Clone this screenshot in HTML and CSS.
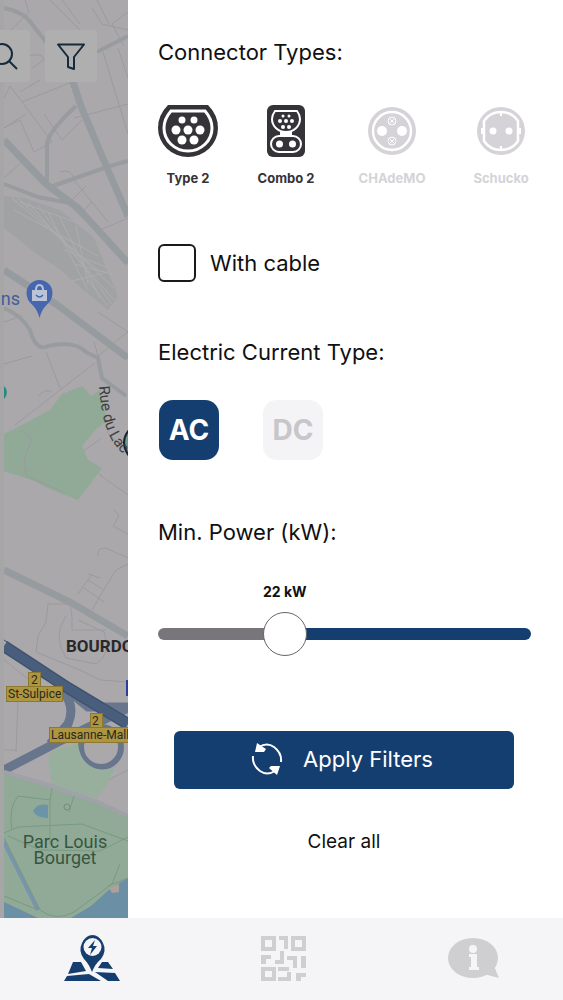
FILE: index.html
```html
<!DOCTYPE html>
<html lang="en">
<head>
<meta charset="utf-8">
<meta name="viewport" content="width=device-width, initial-scale=1">
<title>Charging station filters</title>
<link rel="stylesheet" href="styles.css">
</head>
<body>
<div class="app">
  <aside class="map" aria-label="Map">
    <svg class="map-canvas" viewBox="0 0 128 918" preserveAspectRatio="xMinYMin slice">
      <rect width="128" height="918" fill="#aaa8aa"/>
      <g class="minor">
        <path d="M25 0l4 12-18 18M50 0l30 30M62 0l18 24M92 8l10 16 26 6M97 0l12 24M128 12l-16 12 12 22M103 52l25 82M118 48l10 30M4 98l6-12 42 56-18 10-14-32-16 8M20 92l20-12M22 102l55-22M4 128l22-14M44 114l18 26 20-20M74 118l54-14M4 178l20-18M60 172q12-4 14 8l34 42M72 200l14-14M84 210l8-8M100 230l28-12M30 56q12-4 14 4l-12 8"/>
        <path d="M4 322l18-6M4 364l28-8M46 352l14 36M15 425l80-62M20 430l12 8-8 22 4 14M38 396q8-8 14-4M94 342l4 14 30-24M98 312l30 20M115 424l-8 8 20 20M82 452l20-14M86 460l16 16M100 475l28 20M114 510l5 6-6 10 15 8M98 556q-2-8 8-8l22 10M92 610l14-24 10-16 12-6M78 594l14-20M84 588l20 14M88 580l16 10M88 574l12 4M48 604l-2 18-8 14-2 16M48 604h22l2 12M72 616v14h34M36 652l44 18 20 10 28 2M18 702l-2 50M4 750h12M4 660l28 22M128 770l-20 10-12 18"/>
        <path d="M66 616q-14 20 0 42l30 6q16-10 8-32L78 620"/>
      </g>
      <path d="M4 196l20 2 36 12 34 28 24 58-10 14-22-18-28-24-24-16-30-24z" fill="#a1a2a4"/>
      <g class="rails">
        <path d="M12 198l88 74M18 198l96 90M28 202l86 98M38 206l74 98M48 212l40 78M60 218l40 80M76 226l12 58M20 202l60 22M14 210l84 46M68 282l40-10M74 264l38 10M64 250l44 18M88 280l20 26"/>
      </g>
      <g class="road">
        <path d="M4 8q20 4 28 16l14 18M97 52l31-16M4 184l34 13 32 6 16 16M76 106q-28 26-29 38v40M50 187l57-20 21-6"/>
        <path d="M4 308q18 8 26 22 6 22 18 16 26-6 38 6l12 6 4 20 24 18"/>
      </g>
      <path class="road-main" d="M4 140l42 44 32 24 50 55M73 82l8 24 26 62 21 48"/>
      <path class="road-main" d="M4 270l52 34 72 54M4 570l66 32 58 34"/>
      <path d="M4 434l20-10 26-14 12-16 20-8 9 10 9-6 7 30-12 10-13 16 6 14 14 8-24 32q-28-10-46-20l-28-9z" fill="#90aa97"/>
      <path class="minor" d="M20 430l12 8-8 22 3 12M24 468l3 8 36 16"/>
      <g fill="none">
        <path d="M4 648l50 31 34 28h40M62 690q14 16 6 34l-18 20M4 770l54-28 70-34" stroke="#68768d" stroke-width="9"/>
        <circle cx="101" cy="747" r="20" stroke="#68768d" stroke-width="6"/>
        <path d="M4 646l64 42 60 36" stroke="#485e7c" stroke-width="12"/>
        <path d="M4 640l64 42 60 36M4 652l64 42 60 36" stroke="#3c4e6a"/>
      </g>
      <path d="M52 750l26-6q2 18 16 24 12 4 22-2l-10 20-10 12-44-12-4-26z" fill="#98af9e"/>
      <path d="M4 772l48 14 46 16 30 14v102H4z" fill="#90aa97"/>
      <path d="M4 772l48 14 46 16 30 14" fill="none" stroke="#a1a2a9" stroke-width="4"/>
      <path d="M33 811q4-8 15-6v13q-12 0-15-7z" fill="#6d93a9"/>
      <path d="M4 842l34 68" fill="none" stroke="#7895ad" stroke-width="4"/>
      <path d="M128 878l-17 10-20 18-20 12h57zM4 902l34 16H4z" fill="#6b8fa4"/>
      <path d="M109 888l10-4v8l-7 1z" fill="#ada09b"/>
      <path d="M12 830q-4-22 6-34l32 4 2-12M50 800v44M4 833l14-6 64-3 46 17M74 796l-5 16M8 836l32 14 60 1 28-14M4 838l36 72q16 12 34 2l38-28 8-20M4 896l34 14M108 886l20-8" fill="none" stroke="#789a82"/>
      <circle cx="67" cy="807" r="3" fill="#90aa97" stroke="#6e9077"/>
      <path d="M128 680h-2v16h2z" fill="#2c3e96"/>
      <path d="M4 386q6 6 0 13z" fill="#27897f"/>
      <path d="M129 430q-10 12 0 26" fill="#719782" stroke="#162331" stroke-width="2"/>
      <path d="M39.500 318q-2-8-7-13-6-5-6-12a13 13 0 0 1 26 0q0 7-6 12-5 5-7 13z" fill="#4666ae"/>
      <path d="M32 290h15v11H32z" fill="#bbc4d6"/>
      <path d="M36 290q0-5 3.500-5t3.500 5" fill="none" stroke="#bbc4d6" stroke-width="2"/>
      <path d="M36 295q3.500 4 7 0" fill="none" stroke="#4666ae" stroke-width="1.500"/>
      <rect width="4" height="918" fill="#a7a6a7"/>
      <path id="street" d="M99 386q2 30 9 46 5 14 20 26" fill="none"/>
      <text class="street-name"><textPath href="#street">Rue du Lac</textPath></text>
      <text class="shop-name" x="20" y="305">ns</text>
      <text class="district" x="66" y="652">BOURDO</text>
      <g fill="#ad963f" stroke="#8c7831">
        <rect x="28.500" y="672.500" width="12" height="14"/><rect x="6.500" y="686.500" width="56" height="15"/>
        <rect x="90.500" y="713.500" width="12" height="14"/><rect x="49.500" y="727.500" width="90" height="15"/>
      </g>
      <g class="exit"><text x="31" y="684">2</text><text x="8" y="698">St-Sulpice</text><text x="92" y="725">2</text><text x="51" y="739">Lausanne-Mall</text></g>
      <g class="park"><text x="65" y="848">Parc Louis</text><text x="65" y="864">Bourget</text></g>
    </svg>
    <button class="map-button search" aria-label="Search">
      <svg viewBox="0 0 52 52"><circle cx="24" cy="24" r="10"/><path d="M31 31l8 8"/></svg>
    </button>
    <button class="map-button filter" aria-label="Filter">
      <svg viewBox="0 0 52 52"><path d="M13 14.500h26L29 27v12l-6-2V27z"/></svg>
    </button>
  </aside>

  <main class="panel">
    <section class="connector-section">
      <h2>Connector Types:</h2>
      <div class="connectors">
        <button class="connector" aria-pressed="true">
          <svg width="60" height="52" viewBox="0 0 60 52">
            <path d="M10 0h40q10 10 10 23a30 29 0 0 1-60 0Q0 10 10 0z" fill="currentColor"/>
            <path d="M13 6h34q7 8 7 17a24 23 0 0 1-48 0q0-9 7-17z" fill="none" stroke="#fff" stroke-width="3"/>
            <g fill="#fff"><circle cx="24" cy="15" r="3.500"/><circle cx="36" cy="15" r="3.500"/><circle cx="18" cy="25" r="4.500"/><circle cx="30" cy="25" r="4.500"/><circle cx="42" cy="25" r="4.500"/><circle cx="24" cy="35" r="4.500"/><circle cx="36" cy="35" r="4.500"/></g>
          </svg>
          <span>Type 2</span>
        </button>
        <button class="connector" aria-pressed="true">
          <svg width="38" height="52" viewBox="0 0 38 52">
            <rect width="38" height="52" rx="6" fill="currentColor"/>
            <g fill="none" stroke="#fff" stroke-width="2"><path d="M8 6h22q3 4 3 8a14 13 0 0 1-28 0q0-4 3-8z"/><rect x="4" y="31" width="30" height="16" rx="8"/></g>
            <path d="M13 26h12v5H13z" fill="#fff"/>
            <g fill="#fff"><circle cx="16" cy="11" r="1.500"/><circle cx="22" cy="11" r="1.500"/><circle cx="13" cy="16" r="2"/><circle cx="19" cy="16" r="2"/><circle cx="25" cy="16" r="2"/><circle cx="16" cy="22" r="2"/><circle cx="22" cy="22" r="2"/><circle cx="12.500" cy="39" r="3.500"/><circle cx="25.500" cy="39" r="3.500"/></g>
          </svg>
          <span>Combo 2</span>
        </button>
        <button class="connector wide" aria-pressed="false">
          <svg width="48" height="52" viewBox="0 0 48 52">
            <circle cx="24" cy="26" r="24" fill="currentColor"/><circle cx="24" cy="26" r="19" fill="none" stroke="#fff" stroke-width="2.500"/>
            <g fill="#fff"><circle cx="14" cy="26" r="5"/><circle cx="34" cy="26" r="5"/></g>
            <g fill="none" stroke="#fff"><circle cx="24" cy="16" r="4"/><circle cx="24" cy="36" r="4"/><path d="M21.500 13.500l5 5m0-5l-5 5M21.500 33.500l5 5m0-5l-5 5"/></g>
          </svg>
          <span>CHAdeMO</span>
        </button>
        <button class="connector" aria-pressed="false">
          <svg width="48" height="52" viewBox="0 0 48 52">
            <circle cx="24" cy="26" r="24" fill="currentColor"/><path d="M7 16q6-9 17-9t17 9v20q-6 9-17 9T7 36z" fill="none" stroke="#fff" stroke-width="2.500"/>
            <g fill="#fff"><circle cx="16" cy="26" r="3.500"/><circle cx="32" cy="26" r="3.500"/><path d="M4 23h3v6H4zM41 23h3v6h-3zM23 7h2v4h-2zM23 41h2v4h-2z"/></g>
          </svg>
          <span>Schucko</span>
        </button>
      </div>
    </section>

    <label class="cable"><input type="checkbox">With cable</label>

    <section class="current-section">
      <h2>Electric Current Type:</h2>
      <div class="currents">
        <button class="current" aria-pressed="true">AC</button>
        <button class="current" aria-pressed="false">DC</button>
      </div>
    </section>

    <section class="power-section">
      <h2><label for="power">Min. Power (kW):</label></h2>
      <output class="power-value" for="power">22 kW</output>
      <input class="power" id="power" type="range" min="0" max="69" value="22">
    </section>

    <div class="actions">
      <button class="apply">
        <svg width="32" height="32" viewBox="0 0 32 32"><g fill="none" stroke="#fff" stroke-width="2"><path d="M8 4Q16-1 23 4q8 6 7 15"/><path d="M24 28q-8 5-15 0-8-6-7-15"/></g><path d="M6 0l9 6-2 3H4zM26 32l-8-7 2-2h9z" fill="#fff"/></svg>
        Apply Filters
      </button>
      <button class="clear">Clear all</button>
    </div>
  </main>

  <nav class="tabs" aria-label="Main">
    <a href="#map" class="tab" aria-current="page" aria-label="Map">
      <svg width="56" height="48" viewBox="0 0 56 48"><path d="M9 27h8l5 9-18 3zM44 27l5 7-15-1 4-6zM3 41l22-2 12 7H0zM31 37l20 1 5 8H44z" fill="currentColor"/><path d="M28 37q-3-8-8-13-6-8-2-16 4-8 10.500-8T39 8q4 8-2 16-6 5-9 13z" fill="currentColor"/><circle cx="28.500" cy="12" r="9" fill="#f5f4f7"/><path d="M31 5l-7 8h4l-2 7 7-9h-4z" fill="currentColor"/></svg>
    </a>
    <a href="#scan" class="tab" aria-label="Scan code">
      <svg width="46" height="46" viewBox="0 0 46 46"><path fill="currentColor" fill-rule="evenodd" d="M0 0h15v15H0zM4 4v7h7V4zM18 0h9v13h-4V4h-5zM30 0h15v15H30zM34 4v7h7V4zM0 19h10v4H5v5H0zM19 15h4v13h-9v-4h5zM26 20h10v12h-4v-8h-6zM40 20h5v12h-5zM0 31h15v14H0zM4 35v6h7v-6zM17 31h11v4H17zM30 36v9H17v-4h9v-5zM35 37h10v4h-5v4h-5z"/></svg>
    </a>
    <a href="#info" class="tab" aria-label="Information">
      <svg width="52" height="42" viewBox="0 0 52 42"><ellipse cx="25" cy="20" rx="25" ry="20" fill="currentColor"/><path d="M46 28l5 12-15-4z" fill="currentColor"/><g fill="#f5f4f7"><circle cx="25" cy="11" r="4"/><path d="M21 16h8v13h2v3H21v-3h2v-10h-2z"/></g></svg>
    </a>
  </nav>
</div>
</body>
</html>
```
FILE: styles.css
```css
* { box-sizing: border-box; }
body { margin: 0; font-family: Inter, "Liberation Sans", sans-serif; color: #101010; background: #fff; }
button { font: inherit; color: inherit; border: 0; padding: 0; background: none; cursor: pointer; }
h2 { margin: 0; font-size: 22px; line-height: 28px; font-weight: 400; }
svg { display: block; }

.app { min-height: 100vh; display: grid; grid-template-columns: 128px 1fr; grid-template-rows: 1fr auto; }

.map { position: relative; overflow: hidden; background: #aaa8aa; }
.map-canvas { position: absolute; inset: 0; width: 100%; height: 100%; font-family: Roboto, sans-serif; }
.minor { fill: none; stroke: #9b9a9d; stroke-width: 1; }
.rails { fill: none; stroke: #aeadae; stroke-width: 1; }
.road { fill: none; stroke: #999c9f; stroke-width: 4; }
.road-main { fill: none; stroke: #969b9f; stroke-width: 7; }
.street-name { font-size: 15px; fill: #3f4042; }
.shop-name { font-size: 18px; fill: #3e5f9e; text-anchor: end; }
.district { font-size: 17px; font-weight: 700; fill: #29292b; }
.exit { font-size: 12px; fill: #29271f; }
.park { font-size: 18px; fill: #36563f; text-anchor: middle; }

.map-button { position: absolute; top: 30px; width: 52px; height: 52px; border-radius: 4px; background: #b0afb0; }
.map-button svg { fill: none; stroke: #152a3b; stroke-width: 2; stroke-linejoin: round; }
.search { left: -22px; }
.filter { left: 45px; }

.panel { display: flex; flex-direction: column; padding: 38px 32px 63px 30px; }
.connectors { display: grid; grid-template-columns: 98fr 101fr 114fr 60fr; margin-top: 39px; }
.connector { width: 60px; display: flex; flex-direction: column; align-items: center; gap: 12px; font-size: 13px; line-height: 18px; font-weight: 700; white-space: nowrap; color: #353337; }
.connector.wide { width: 70px; }
.connector[aria-pressed="false"] { color: #d5d3d7; }

.cable { display: flex; align-items: center; gap: 14px; margin-top: 57px; font-size: 22px; line-height: 28px; }
.cable input { appearance: none; width: 38px; height: 38px; margin: 0; border: 2px solid #1a1a1a; border-radius: 6px; background: #fff; }

.current-section { margin-top: 56px; }
.currents { display: flex; gap: 44px; margin-top: 34px; padding-left: 1px; }
.current { width: 60px; height: 60px; border-radius: 14px; background: #153e70; color: #fff; font-size: 28px; font-weight: 700; }
.current[aria-pressed="false"] { background: #f4f3f6; color: #c7c6c9; }

.power-section { display: flex; flex-direction: column; margin-top: 58px; }
.power-value { width: 68%; margin-top: 38px; text-align: center; font-size: 14px; line-height: 16px; font-weight: 700; }
.power { appearance: none; width: 100%; height: 44px; margin: 12px 0 0; background: none; }
.power::-webkit-slider-runnable-track { height: 12px; border-radius: 6px; background: linear-gradient(to right, #78767a 34%, #153e70 34%); }
.power::-webkit-slider-thumb { appearance: none; width: 44px; height: 44px; margin-top: -16px; border: 1px solid #66666a; border-radius: 50%; background: #fff; }

.actions { display: flex; flex-direction: column; align-items: center; gap: 41px; margin-top: 75px; padding: 0 17px 0 16px; }
.apply { width: 100%; height: 58px; display: flex; align-items: center; justify-content: center; gap: 20px; padding: 0 4px 2px 0; border-radius: 6px; background: #153e70; color: #fff; font-size: 22px; }
.clear { font-size: 19px; line-height: 24px; }

.tabs { grid-column: 1 / -1; display: grid; grid-template-columns: 184fr 200fr 179fr; height: 82px; background: #f5f4f7; }
.tab { display: flex; align-items: center; justify-content: center; color: #cfced1; }
.tab[aria-current] { color: #153e70; }
```
